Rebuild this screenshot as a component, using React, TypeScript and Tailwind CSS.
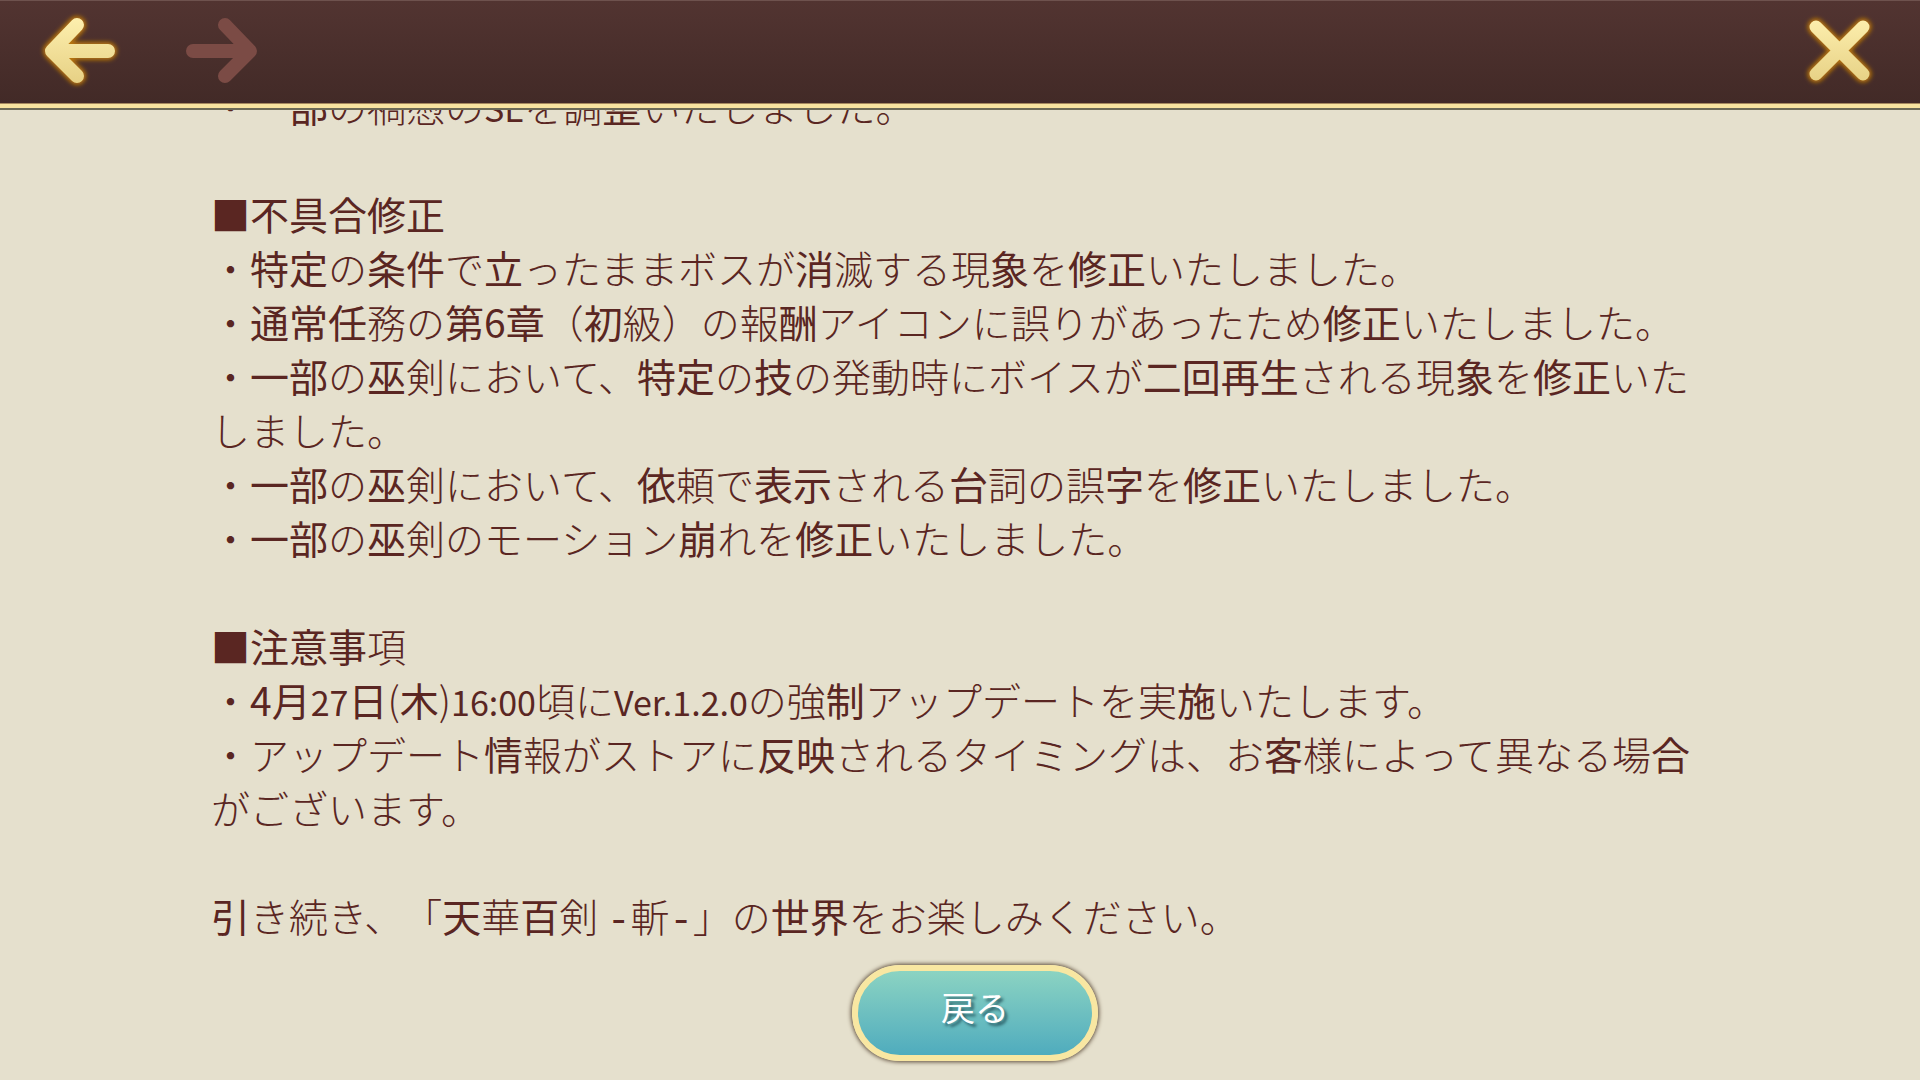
const sections: string[][] = [
  ["・一部の禍憑のSEを調整いたしました。"],
  [
    "■不具合修正",
    "・特定の条件で立ったままボスが消滅する現象を修正いたしました。",
    "・通常任務の第6章（初級）の報酬アイコンに誤りがあったため修正いたしました。",
    "・一部の巫剣において、特定の技の発動時にボイスが二回再生される現象を修正いたしました。",
    "・一部の巫剣において、依頼で表示される台詞の誤字を修正いたしました。",
    "・一部の巫剣のモーション崩れを修正いたしました。",
  ],
  [
    "■注意事項",
    "・4月27日(木)16:00頃にVer.1.2.0の強制アップデートを実施いたします。",
    "・アップデート情報がストアに反映されるタイミングは、お客様によって異なる場合がございます。",
  ],
  ["引き続き、「天華百剣 -斬-」の世界をお楽しみください。"],
];

// Characters drawn in the heavier style; the others use the thin style.
const HEAVY =
  /([一部巫整不具合修正特定条件立消象通常任第章初酬技二回再生依表示台字崩注意事月日木制施情反映客引天百世界]+|[0-9A-Za-z:.]+|-)/;

function partClass(part: string) {
  if (part === "-") return "font-['Liberation_Mono',monospace] leading-none";
  if (/^[0-9A-Za-z:.]{2,}$/.test(part)) return "text-[34px] leading-none font-normal";
  return "font-normal";
}

function Line({ text }: { text: string }) {
  return (
    <p>
      {text.split(HEAVY).map((part, i) =>
        i % 2 === 0 ? (
          part
        ) : (
          <span key={i} className={partClass(part)}>
            {part}
          </span>
        ),
      )}
    </p>
  );
}

const arrow = "M43 17 L18 43 L43 68 M20 43 H74";

function ArrowLeft() {
  return (
    <svg viewBox="0 0 96 86" className="h-[86px] w-24" aria-hidden="true">
      <defs>
        <linearGradient id="gold" gradientUnits="userSpaceOnUse" x1="0" y1="10" x2="0" y2="76">
          <stop offset="0" stopColor="#fdefae" />
          <stop offset="1" stopColor="#e6d084" />
        </linearGradient>
        <filter id="glow" filterUnits="userSpaceOnUse" x="0" y="0" width="96" height="86">
          <feGaussianBlur stdDeviation="2" />
        </filter>
      </defs>
      <g fill="none" strokeLinecap="round" strokeLinejoin="round">
        <path d={arrow} stroke="#b8740a" strokeWidth="18" filter="url(#glow)" />
        <path d={arrow} stroke="url(#gold)" strokeWidth="14" />
      </g>
    </svg>
  );
}

function ArrowRight() {
  return (
    <svg viewBox="0 0 96 86" className="h-[86px] w-24" aria-hidden="true">
      <path
        d="M53 17 L78 43 L53 68 M76 43 H21"
        fill="none"
        stroke="#7b4b45"
        strokeWidth="14"
        strokeLinecap="round"
        strokeLinejoin="round"
      />
    </svg>
  );
}

function Cross() {
  return (
    <svg viewBox="0 0 96 86" className="h-[86px] w-24" aria-hidden="true">
      <g fill="none" strokeLinecap="round">
        <path d="M24 19 L71 66 M71 19 L24 66" stroke="#b8740a" strokeWidth="17" filter="url(#glow)" />
        <path d="M24 19 L71 66 M71 19 L24 66" stroke="url(#gold)" strokeWidth="13" />
      </g>
    </svg>
  );
}

export default function App() {
  return (
    <div className="flex h-screen flex-col overflow-hidden bg-[#e5e0cd] font-['Noto_Sans_CJK_JP',sans-serif] text-[#5a2622]">
      <header className="flex shrink-0 flex-col">
        <div className="flex items-start justify-between border-t border-[#6e524e] bg-linear-to-b from-[#523431] to-[#422a27] px-8 pt-[7px] pb-[9px]">
          <nav className="ml-0.5 flex gap-[42px]">
            <button type="button" aria-label="前へ">
              <ArrowLeft />
            </button>
            <button type="button" aria-label="次へ" disabled>
              <ArrowRight />
            </button>
          </nav>
          <button type="button" aria-label="閉じる">
            <Cross />
          </button>
        </div>
        <div className="h-[5px] border-t border-[#a5895f] bg-[#f8e4a0]" />
        <div className="h-0.5 bg-[#6d6b57]" />
      </header>
      <main className="min-h-0 flex-1 overflow-hidden px-[211px]">
        <article className="-mt-8 flex flex-col gap-[54px] text-[39px] leading-[54px] font-light [text-spacing-trim:space-all]">
          {sections.map((lines, i) => (
            <section key={i}>
              {lines.map((line) => (
                <Line key={line} text={line} />
              ))}
            </section>
          ))}
        </article>
        <div className="mt-[23px] ml-[30px] flex justify-center">
          <button
            type="button"
            className="h-24 w-[246px] rounded-full border-6 border-[#f8e7a2] bg-linear-to-b from-[#8fd6c2] to-[#4aa9bd] bg-origin-border pb-3 text-[34px] leading-10 font-normal text-white shadow-[0_0_4px_1px_#5b4a38] text-shadow-[3px_3px_3px_rgb(20_60_70/0.7)]"
          >
            戻る
          </button>
        </div>
      </main>
    </div>
  );
}
